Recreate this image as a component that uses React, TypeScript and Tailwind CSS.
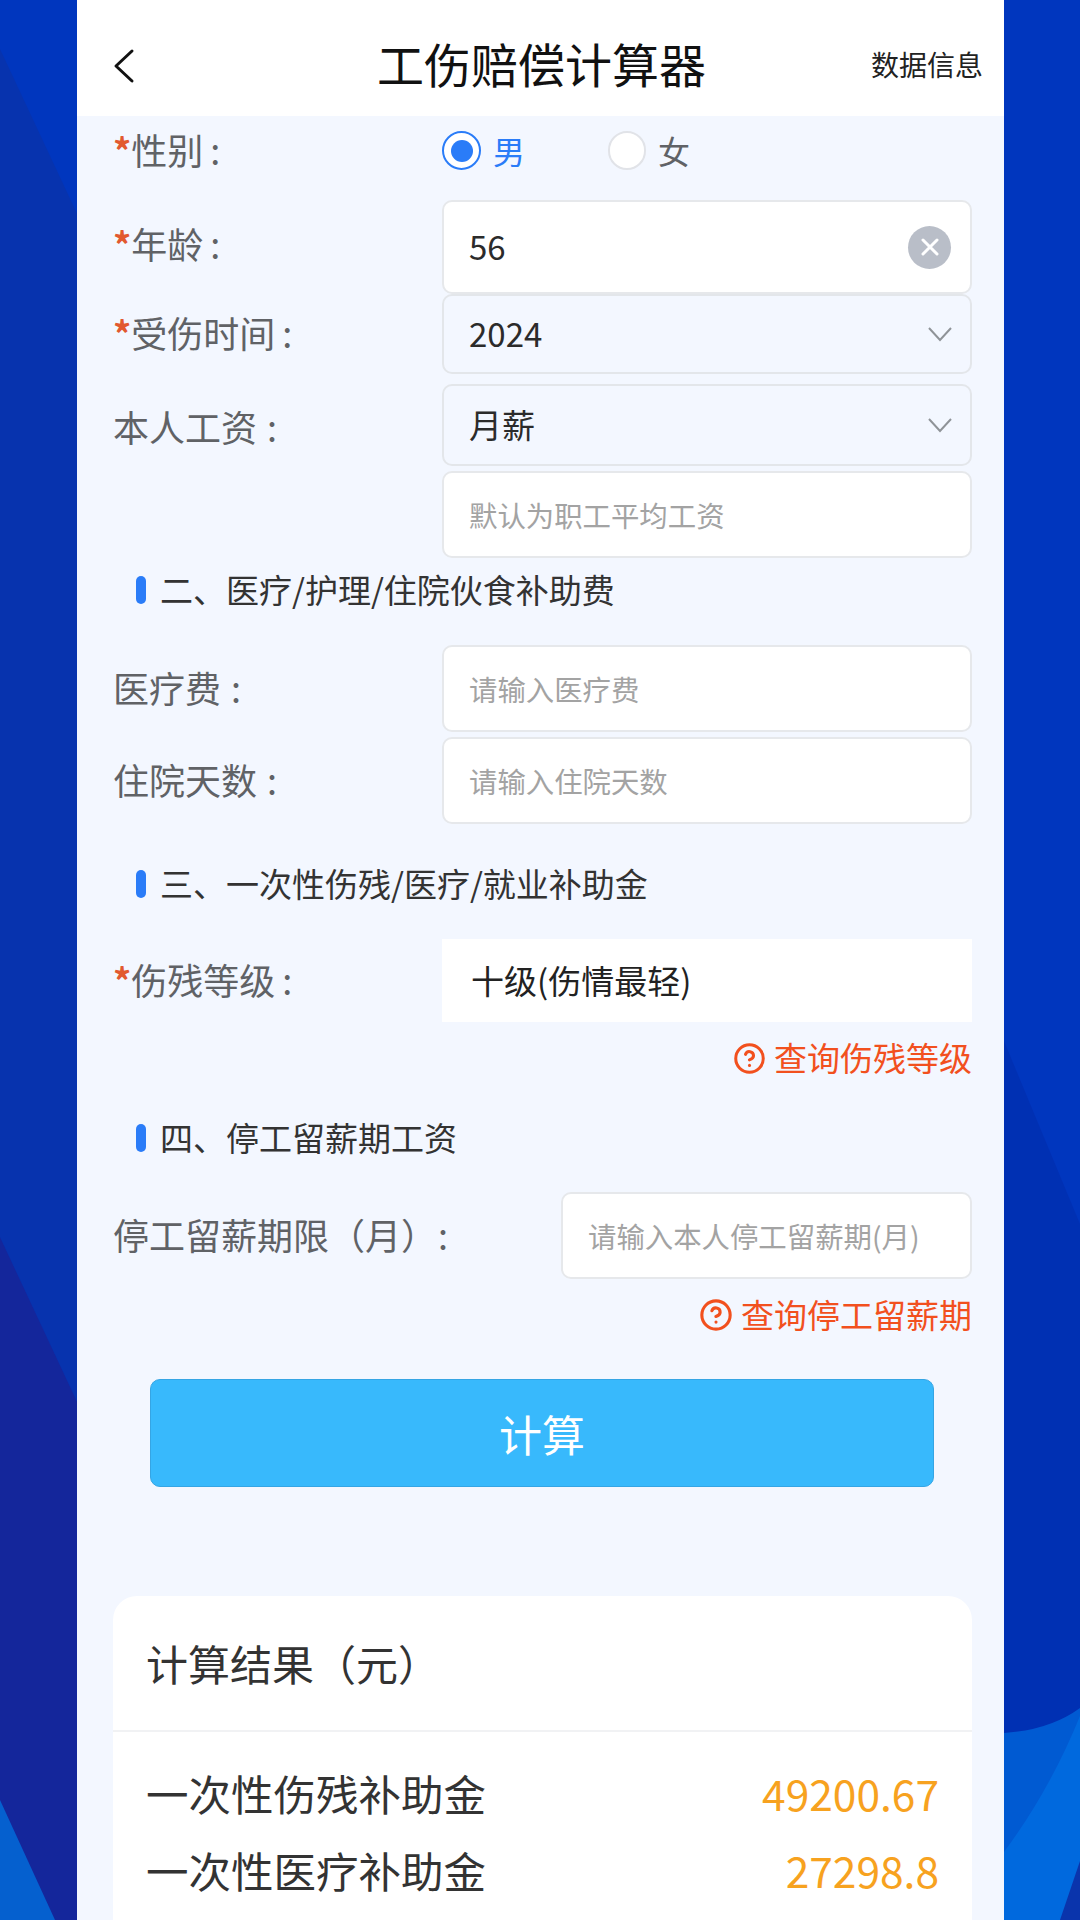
import { CircleHelp } from 'lucide-react';

const font = "font-['Noto_Sans_CJK_SC','Noto_Sans',sans-serif]";

// 背景图
function Background() {
  return (
    <svg className="absolute inset-0" width="1080" height="1920" viewBox="0 0 1080 1920">
      <rect width="1080" height="1920" fill="#0036be" />
      <polygon points="0,49 80,220 80,1408 0,1237" fill="#0733ae" />
      <polygon points="0,1237 80,1408 80,1920 0,1920" fill="#14269b" />
      <polygon points="0,1800 55,1920 0,1920" fill="#0560cf" />
      <polygon points="1004,1041 1080,1224 1080,1740 1004,1740" fill="#0030b3" />
      <path d="M1004 1733 Q1050 1730 1080 1708 L1080 1920 L1004 1920 Z" fill="#005ad2" />
      <path d="M1004 1852 Q1050 1790 1080 1716 L1080 1920 L1004 1920 Z" fill="#0069de" />
      <polygon points="1080,1861 1080,1920 1060,1920" fill="#0a34ac" />
    </svg>
  );
}

function BackIcon() {
  return (
    <svg width="24" height="38" viewBox="0 0 24 38" fill="none" stroke="#111" strokeWidth="3" strokeLinecap="round" strokeLinejoin="round">
      <path d="M20 4L4 19l16 15" />
    </svg>
  );
}

function ChevronIcon() {
  return (
    <svg width="26" height="16" viewBox="0 0 26 16" fill="none" stroke="#8f9398" strokeWidth="2">
      <path d="M2 2l11 12L24 2" />
    </svg>
  );
}

function ClearIcon() {
  return (
    <div className="w-[43px] h-[43px] rounded-full bg-[#b9bec8] flex items-center justify-center">
      <svg width="20" height="20" viewBox="0 0 20 20" fill="none" stroke="#fff" strokeWidth="3" strokeLinecap="round">
        <path d="M3 3l14 14M17 3L3 17" />
      </svg>
    </div>
  );
}

function Label({ text, required, className, colonClass }: { text: string; required?: boolean; className?: string; colonClass?: string }) {
  return (
    <span className={`block -ml-[1px] -mt-[4px] text-[36px] text-[#606266] whitespace-nowrap ${className ?? ''}`}>
      {required && <span className="text-[#e2592f] font-bold">*</span>}
      {text}
      <span className={colonClass ?? (required ? 'ml-[7px]' : 'ml-[10px]')}>:</span>
    </span>
  );
}

function Row({ text, required, children, className, labelClass }: { text: string; required?: boolean; children: React.ReactNode; className: string; labelClass?: string }) {
  return (
    <div className={`flex items-center ${className}`}>
      <div className="w-[328px]">
        {text && <Label text={text} required={required} className={labelClass} />}
      </div>
      <div className="w-[530px] h-full">{children}</div>
    </div>
  );
}

function TextInput({ placeholder }: { placeholder: string }) {
  return (
    <input
      placeholder={placeholder}
      className="w-full h-full bg-white border-2 border-[#e6e8eb] rounded-[10px] px-[25px] text-[28.4px] outline-none placeholder:text-[#a3a3a3]"
    />
  );
}

function SelectBox({ value }: { value: string }) {
  return (
    <div className="w-full h-full border-2 border-[#e3e6ea] rounded-[10px] pl-[25px] pr-[17px] flex items-center justify-between text-[33px] text-[#2b2b2b]">
      <span>{value}</span>
      <ChevronIcon />
    </div>
  );
}

function SectionTitle({ text, className }: { text: string; className: string }) {
  return (
    <div className={`h-[40px] flex items-center pl-[22px] ${className}`}>
      <span className="w-[10px] h-[28px] rounded-full bg-[#2a7cf8] mr-[14px]" />
      <span className="text-[33px] text-[#333]">{text}</span>
    </div>
  );
}

function HelpLink({ text, className, iconSize }: { text: string; className: string; iconSize: number }) {
  return (
    <div className={`h-[40px] flex items-center justify-end gap-[8px] text-[33px] text-[#f2501e] ${className}`}>
      <CircleHelp size={iconSize} strokeWidth={2.2} />
      <span>{text}</span>
    </div>
  );
}

export default function App() {
  return (
    <div className={`relative w-[1080px] h-[1920px] overflow-hidden ${font}`}>
      <Background />

      <div className="relative ml-[77px] w-[927px] h-[1920px] bg-[#f3f7ff] flex flex-col">
        {/* Cabeçalho */}
        <div className="h-[116px] bg-white grid grid-cols-[1fr_auto_1fr] items-center pt-[16px] shrink-0">
          <div className="pl-[35px] -mt-[1px]">
            <BackIcon />
          </div>
          <div className="text-[47px] text-[#111] leading-none ml-[2px] -mt-[8px]">工伤赔偿计算器</div>
          <div className="text-[28px] text-[#222] text-right pr-[21px] -mt-[4px]">数据信息</div>
        </div>

        <div className="flex-1 flex flex-col pl-[37px] pr-[32px]">
          {/* 性别 */}
          <div className="flex items-center h-[39px] mt-[15px]">
            <div className="w-[328px]">
              <Label text="性别" required />
            </div>
            <div className="w-[39px] h-[39px] rounded-full border-2 border-[#2a7cf8] bg-white flex items-center justify-center">
              <span className="w-[22px] h-[22px] rounded-full bg-[#2a7cf8]" />
            </div>
            <span className="text-[32px] text-[#2a7cf8] ml-[12px] -mt-[2px]">男</span>
            <div className="w-[38px] h-[39px] rounded-full border-2 border-[#e1e3e8] bg-white ml-[83px]" />
            <span className="text-[32px] text-[#606266] ml-[12px] -mt-[2px]">女</span>
          </div>

          <Row text="年龄" required className="h-[94px] mt-[30px]" labelClass="-mt-[8px]">
            <div className="w-full h-full bg-white border-2 border-[#e6e8eb] rounded-[10px] pl-[25px] pr-[19px] flex items-center justify-between text-[33px] text-[#2b2b2b]">
              <span>56</span>
              <ClearIcon />
            </div>
          </Row>
          <Row text="受伤时间" required className="h-[80px]">
            <SelectBox value="2024" />
          </Row>
          <Row text="本人工资" className="h-[82px] mt-[10px]" labelClass="mt-[2px]">
            <SelectBox value="月薪" />
          </Row>
          <Row text="" className="h-[87px] mt-[5px]">
            <TextInput placeholder="默认为职工平均工资" />
          </Row>

          <SectionTitle text="二、医疗/护理/住院伙食补助费" className="mt-[12px]" />
          <Row text="医疗费" className="h-[87px] mt-[35px]">
            <TextInput placeholder="请输入医疗费" />
          </Row>
          <Row text="住院天数" className="h-[87px] mt-[5px]">
            <TextInput placeholder="请输入住院天数" />
          </Row>

          <SectionTitle text="三、一次性伤残/医疗/就业补助金" className="mt-[40px]" />
          <Row text="伤残等级" required className="h-[83px] mt-[35px]">
            <div className="w-full h-full bg-white pl-[29px] flex items-center text-[33px] text-[#222]">十级(伤情最轻)</div>
          </Row>
          <HelpLink text="查询伤残等级" className="mt-[16px]" iconSize={33} />

          <SectionTitle text="四、停工留薪期工资" className="mt-[40px]" />
          <div className="flex items-center justify-between h-[87px] mt-[34px]">
            <Label text="停工留薪期限（月）" colonClass="ml-[1px]" />
            <div className="w-[411px] h-full">
              <TextInput placeholder="请输入本人停工留薪期(月)" />
            </div>
          </div>
          <HelpLink text="查询停工留薪期" className="mt-[16px]" iconSize={34} />

          <button className="ml-[36px] w-[784px] h-[108px] mt-[44px] shrink-0 bg-[#38b9fc] border border-[#35a5e4] rounded-[10px] text-[43px] text-white">
            计算
          </button>

          {/* 计算结果 */}
          <div className="flex-1 -ml-[1px] mt-[109px] bg-white rounded-t-[24px]">
            <div className="h-[136px] border-b-2 border-[#f1f2f4] pl-[33px] pb-[2px] flex items-center text-[42px] text-[#333]">
              计算结果（元）
            </div>
            <div className="pt-[22px] pl-[33px] pr-[33px] text-[42.5px]">
              <div className="h-[77px] flex items-center justify-between">
                <span className="text-[#333]">一次性伤残补助金</span>
                <span className="text-[#f7a21f]">49200.67</span>
              </div>
              <div className="h-[77px] flex items-center justify-between">
                <span className="text-[#333]">一次性医疗补助金</span>
                <span className="text-[#f7a21f]">27298.8</span>
              </div>
            </div>
          </div>
        </div>
      </div>
    </div>
  );
}
